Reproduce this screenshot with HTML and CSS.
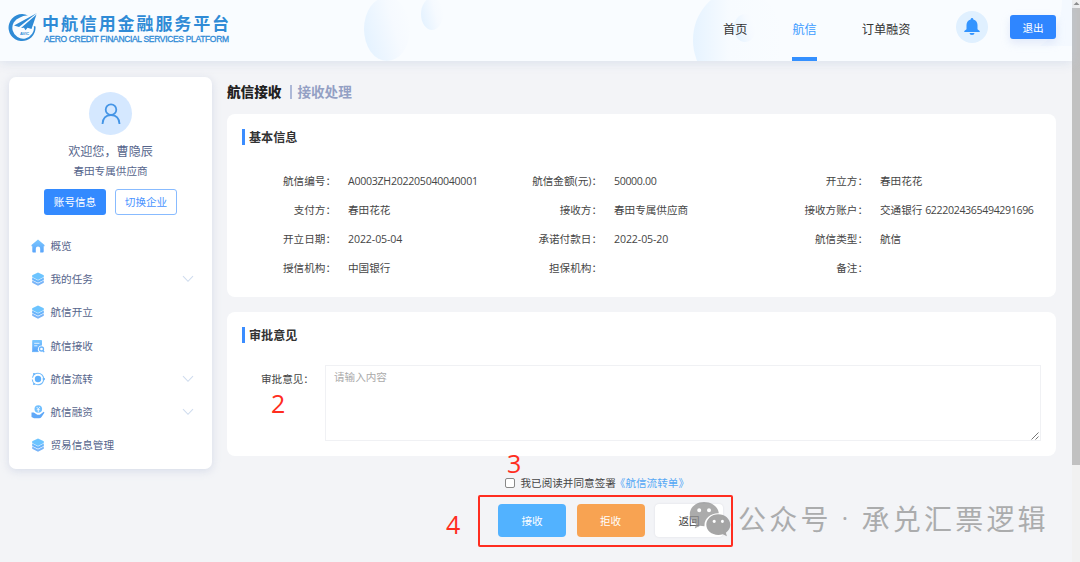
FILE: index.html
```html
<!DOCTYPE html>
<html lang="zh-CN">
<head>
<meta charset="utf-8">
<title>中航信用金融服务平台</title>
<link rel="stylesheet" href="styles.css">
</head>
<body>
<svg class="defs" width="0" height="0" aria-hidden="true">
  <defs>
    <linearGradient id="blue" x1="0" y1="0" x2="0" y2="1"><stop offset="0" stop-color="#7cc8ff"/><stop offset="1" stop-color="#5aa5fb"/></linearGradient>
    <symbol id="layers" viewBox="0 0 14 14">
      <path fill="#6cc4ff" d="M7 .4 12.8 3.2V4.900L7 7.900 1.200 4.900V3.200Z"/>
      <path fill="#68b4fb" d="M1.200 5.600 7 8.500l5.800-2.900v2.300L7 10.800 1.200 7.900Z"/>
      <path fill="#78b4f8" d="M1.200 8.600 7 11.500l5.800-2.900v2.200L7 13.700 1.200 10.800Z"/>
    </symbol>
    <symbol id="chevron" viewBox="0 0 12 8"><path fill="none" stroke="#cfdcee" stroke-width="1.100" d="M1 1.200 6 6.300l5-5.100"/></symbol>
  </defs>
</svg>
<div class="app">
  <div class="page">
    <header class="header">
      <svg class="header-bg" width="1072" height="61" viewBox="0 0 1072 61">
        <defs>
          <linearGradient id="b1" x1="0" y1=".7" x2="1" y2=".3"><stop offset="0" stop-color="#e4f2ff"/><stop offset=".65" stop-color="#f6faff"/><stop offset="1" stop-color="#f9fcff"/></linearGradient>
          <linearGradient id="b2"><stop offset="0" stop-color="#e6f3ff"/><stop offset=".4" stop-color="#f7fbff"/><stop offset="1" stop-color="#f9fcff"/></linearGradient>
        </defs>
        <ellipse cx="387" cy="29" rx="23" ry="32" fill="url(#b1)"/>
        <ellipse cx="432" cy="14" rx="11" ry="16" fill="url(#b1)"/>
        <ellipse cx="738" cy="40" rx="45" ry="50" fill="url(#b2)"/>
        <ellipse cx="745" cy="28" rx="11" ry="14" fill="url(#b1)"/>
        <path d="M1062 0h10v46h-32Q1062 32 1062 0Z" fill="#f4f9ff"/>
      </svg>
      <div class="brand">
        <svg class="brand-mark" width="30" height="32" viewBox="0 0 30 32">
          <path fill="#2f8bd6" d="M20 3.500A13.500 13.500 0 1 0 27.500 14.500L25.800 14A10.800 10.800 0 1 1 12 5.500Q16 3 20 3.500Z"/>
          <path fill="#2f8bd6" d="M29 1 6 13.500l5 1.500ZM28.500 2.500 13 16l3-.2 1.500 2.400 2-2.400 4 1.200Z"/>
          <text class="mark-text" x="12" y="22.500">AVIC</text>
        </svg>
        <div class="brand-text">
          <div class="brand-title">中航信用金融服务平台</div>
          <div class="brand-sub">AERO CREDIT FINANCIAL SERVICES PLATFORM</div>
        </div>
      </div>
      <nav class="nav">
        <a class="nav-item">首页</a>
        <a class="nav-item active">航信</a>
        <a class="nav-item">订单融资</a>
      </nav>
      <div class="bell">
        <svg width="16" height="18" viewBox="0 0 16 18"><path fill="#3394ff" d="M8 0a1.300 1.300 0 0 1 1.300 1.400C12 2 13.500 4.200 13.500 7v4.200L15.700 13v.9H.3V13l2.200-1.800V7C2.500 4.200 4 2 6.700 1.400A1.300 1.300 0 0 1 8 0ZM5.500 15h5a2.500 2 0 0 1-5 0Z"/></svg>
      </div>
      <button class="logout">退出</button>
    </header>

    <div class="body">
      <aside class="sidebar">
        <div class="avatar">
          <svg width="20" height="22" viewBox="0 0 20 22" fill="none" stroke="#4595e6" stroke-width="1.800"><circle cx="10" cy="6.700" r="5.300"/><path d="M1.500 21c.3-5.500 3.500-8.800 8.500-8.800s8.200 3.300 8.500 8.800"/></svg>
        </div>
        <div class="welcome">欢迎您，曹隐辰</div>
        <div class="company">春田专属供应商</div>
        <div class="account">
          <button class="small primary">账号信息</button>
          <button class="small outline">切换企业</button>
        </div>
        <ul class="menu">
          <li><svg class="mi" viewBox="0 0 14 14"><path fill="url(#blue)" d="M7 .4 13.500 6v1.200h-.8v5.300q0 .9-.9.900H9.200V9.800a2.200 2.200 0 0 0-4.400 0v3.600H2.200q-.9 0-.9-.9V7.200H.5V6Z"/></svg><span>概览</span></li>
          <li><svg class="mi"><use href="#layers"/></svg><span>我的任务</span><svg class="chev"><use href="#chevron"/></svg></li>
          <li><svg class="mi"><use href="#layers"/></svg><span>航信开立</span></li>
          <li><svg class="mi" viewBox="0 0 14 14"><path fill="url(#blue)" d="M2 1h8.200q.8 0 .8.800v4.800a3.600 3.600 0 0 0-3.300 5.900H2q-.8 0-.8-.8V1.800Q1.200 1 2 1Z"/><path stroke="#fff" stroke-width=".8" d="M3.200 4.300h5.300M3.200 6.800h3.200"/><path stroke="#69b3fb" stroke-width="1" d="M1 12.600h6.500"/><circle cx="10.500" cy="10" r="2" fill="none" stroke="#69b3fb" stroke-width="1.300"/><path stroke="#69b3fb" stroke-width="1.200" d="m11.800 11.500 1.400 1.700"/></svg><span>航信接收</span></li>
          <li><svg class="mi" viewBox="0 0 14 14"><circle cx="7" cy="7" r="3.200" fill="#5fb0fb"/><circle cx="7" cy="7" r="5.700" fill="none" stroke="#74bcfb" stroke-width="1.100" stroke-dasharray="15.900 2" stroke-dashoffset="-1"/><circle cx="12.800" cy="7" r="1.200" fill="#68b5fb"/><circle cx="3" cy="2" r="1.100" fill="#68b5fb"/><circle cx="3" cy="12" r="1.100" fill="#68b5fb"/></svg><span>航信流转</span><svg class="chev"><use href="#chevron"/></svg></li>
          <li><svg class="mi" viewBox="0 0 14 14"><circle cx="7.300" cy="4" r="3.800" fill="#72c0ff"/><path fill="none" stroke="#fff" stroke-width=".8" d="m5.700 2 1.600 1.900L8.900 2M7.300 4v3.200M5.800 4.700h3"/><path fill="#5fa8f8" d="M.5 7.500h2.300l3.500 2.300h2.500L12.700 6.800q1 .2.500 1.200L10.500 12q-.8 1.300-2.500 1.300H3L.5 12Z"/></svg><span>航信融资</span><svg class="chev"><use href="#chevron"/></svg></li>
          <li><svg class="mi"><use href="#layers"/></svg><span>贸易信息管理</span></li>
        </ul>
      </aside>

      <main class="main">
        <div class="crumb"><b>航信接收</b><i></i><span>接收处理</span></div>
        <section class="card info-card">
          <h2>基本信息</h2>
          <dl class="info">
            <div><dt>航信编号：</dt><dd class="num code">A0003ZH202205040040001</dd></div>
            <div><dt>航信金额(元)：</dt><dd class="num">50000.00</dd></div>
            <div><dt>开立方：</dt><dd>春田花花</dd></div>
            <div><dt>支付方：</dt><dd>春田花花</dd></div>
            <div><dt>接收方：</dt><dd>春田专属供应商</dd></div>
            <div><dt>接收方账户：</dt><dd>交通银行 <span class="num">6222024365494291696</span></dd></div>
            <div><dt>开立日期：</dt><dd class="num date">2022-05-04</dd></div>
            <div><dt>承诺付款日：</dt><dd class="num date">2022-05-20</dd></div>
            <div><dt>航信类型：</dt><dd>航信</dd></div>
            <div><dt>授信机构：</dt><dd>中国银行</dd></div>
            <div><dt>担保机构：</dt><dd></dd></div>
            <div><dt>备注：</dt><dd></dd></div>
          </dl>
        </section>
        <section class="card opinion-card">
          <h2>审批意见</h2>
          <div class="opinion">
            <label>审批意见：</label>
            <div class="textarea">请输入内容
              <svg class="grip" width="8" height="8" viewBox="0 0 8 8"><path stroke="#777" stroke-width="1" d="M.5 7.500l7-7M4.500 7.500l3-3"/></svg>
            </div>
          </div>
        </section>
        <div class="agree"><span class="checkbox"></span><span>我已阅读并同意签署</span><a>《航信流转单》</a></div>
        <div class="actions">
          <button class="btn accept">接收</button>
          <button class="btn reject">拒收</button>
          <button class="btn back">返回</button>
        </div>
      </main>
    </div>
  </div>
  <div class="scrollbar"><svg width="8" height="8" viewBox="0 0 8 8"><path fill="#8a8a8a" d="M1.500 5 4.500 2l3 3Z"/></svg><div class="thumb"></div></div>
</div>

<div class="mark frame"></div>
<div class="mark m2">2</div>
<div class="mark m3">3</div>
<div class="mark m4">4</div>
<div class="watermark">
  <svg width="42" height="36" viewBox="0 0 42 36">
    <path fill="#8f8f8f" fill-opacity=".75" fill-rule="evenodd" d="M15 1C23 1 29.300 6 29.800 12.300 21.500 12 15 17.500 15.500 25.300L11 24.800 5.800 27.500 7 23C3 20.800.8 17.200.8 13.200.8 6.300 7 1 15 1ZM10.200 7.200a2 2 0 1 0 0 4 2 2 0 0 0 0-4ZM20 7.200a2 2 0 1 0 0 4 2 2 0 0 0 0-4Z"/>
    <path fill="#9b9b9b" fill-opacity=".9" fill-rule="evenodd" d="M29.300 13.300c6.700 0 12 4.700 12 10.500 0 3.400-1.700 6-4.400 7.900l1 3.600-4-2.100c-1.400.5-3 .7-4.600.7-6.700 0-12-4.400-12-10.100s5.300-10.500 12-10.500ZM25.200 18.700a1.600 1.600 0 1 0 0 3.200 1.600 1.600 0 0 0 0-3.200ZM33.500 18.700a1.600 1.600 0 1 0 0 3.200 1.600 1.600 0 0 0 0-3.200Z"/>
  </svg>
  <span class="wm-a">公众号</span><span class="wm-dot">·</span><span>承兑汇票逻辑</span>
</div>
</body>
</html>
```
FILE: styles.css
```css
* { box-sizing: border-box; }
body {
  margin: 0;
  width: 1080px;
  height: 562px;
  position: relative;
  overflow: hidden;
  background: #f3f4f7;
  color: #454545;
  font: 10.6px/16px "Open Sans", "Noto Sans CJK SC", sans-serif;
}
button { font: inherit; padding: 0; border: 0; }
ul, dl, dd, h2 { margin: 0; padding: 0; }
.defs { position: absolute; }
.app { display: flex; height: 562px; }
.page { width: 1072px; }

.header {
  position: relative;
  display: flex;
  height: 61px;
  background: #f9fcff;
  box-shadow: 0 2px 10px rgba(190, 205, 225, .45);
}
.header-bg { position: absolute; left: 0; top: 0; }
.header > :not(.header-bg) { position: relative; }
.brand { display: flex; width: 723px; padding: 12px 0 0 8px; }
.mark-text { font: bold 4px "Liberation Sans", sans-serif; fill: #2f8bd6; }
.brand-text { margin-left: 4px; color: #2f8bd6; white-space: nowrap; }
.brand-title { font: bold 17px/22px "Noto Sans CJK SC", sans-serif; letter-spacing: 1.9px; }
.brand-sub { font: 8.5px/10px "Liberation Sans", sans-serif; letter-spacing: -.33px; margin: 0 0 0 2px; -webkit-text-stroke: .3px #2f8bd6; }
.nav { display: flex; gap: 45px; width: 233px; font-size: 12.200px; color: #333; }
.nav-item { height: 61px; padding-top: 22px; white-space: nowrap; }
.nav-item.active { color: #3c9bff; border-bottom: 4px solid #3490ff; }
.bell { width: 32px; height: 32px; margin-top: 11px; border-radius: 50%; background: #e0f0ff; display: flex; align-items: center; justify-content: center; }
.logout { margin: 15px 0 0 22px; padding-top: 1px; width: 46px; height: 24px; border-radius: 3px; background: #2f86ff; color: #fff; box-shadow: 0 4px 8px rgba(190, 205, 240, .4); }

.body { display: flex; gap: 15px; padding: 16px 0 0 9px; }
.sidebar {
  width: 203px;
  height: 392px;
  padding-top: 15px;
  display: flex;
  flex-direction: column;
  align-items: center;
  border-radius: 7px;
  background: #fff;
  color: #56658c;
  box-shadow: 0 2px 9px rgba(180, 190, 215, .45);
}
.avatar { width: 43px; height: 43px; border-radius: 50%; background: #d5e8ff; display: flex; align-items: center; justify-content: center; }
.welcome { margin-top: 9px; font-size: 12.100px; }
.company { margin-top: 3px; }
.account { display: flex; gap: 9px; margin-top: 10px; }
.small { width: 62px; height: 26px; border-radius: 3px; }
.primary { background: #338aff; color: #fff; }
.outline { background: #fff; color: #4a94ff; border: 1px solid #88bbff; }
.menu { align-self: stretch; list-style: none; margin-top: 14px; padding: 0 18px 0 22px; }
.menu li { height: 33.300px; display: flex; align-items: center; }
.mi { width: 14px; height: 14px; margin-right: 5.500px; }
.chev { width: 12px; height: 8px; margin-left: auto; }

.main { width: 829px; }
.crumb { display: flex; align-items: center; height: 30px; font-size: 13.600px; font-weight: bold; color: #222; }
.crumb i { width: 2px; height: 14px; margin: 0 5px 0 9px; background: #adb9d8; }
.crumb span { color: #93a0c4; }
.card { background: #fff; border-radius: 8px; }
.card h2 { height: 16px; padding-left: 4px; border-left: 3px solid #3b8dff; font-size: 12.100px; line-height: 18px; color: #333; }
.info-card { height: 183px; margin-top: 7px; padding: 15px; }
.info { display: grid; grid-template-columns: repeat(3, 266px); margin: 21px 0 0 -15px; }
.info div { display: flex; height: 29px; align-items: center; white-space: nowrap; }
.info dt { width: 109px; flex-shrink: 0; text-align: right; }
.info dd { margin-left: 12px; }
.num { letter-spacing: -.35px; }
.code { letter-spacing: -.27px; }
.date { letter-spacing: -.1px; }
.opinion-card { height: 144px; margin-top: 15px; padding: 15px; }
.opinion { display: flex; margin-top: 22px; }
.opinion label { width: 64px; margin: 6px 0 0 19px; }
.textarea { position: relative; width: 716px; height: 76px; padding: 3px 8px; border: 1px solid #f0f1f4; color: #aaa; }
.grip { position: absolute; right: 1px; bottom: 0; }
.agree { display: flex; align-items: center; height: 16px; margin: 19px 0 0 278px; }
.checkbox { width: 10px; height: 10px; margin-right: 5.500px; border: 1px solid #888; border-radius: 2px; background: #fff; }
.agree a { margin-left: -1px; color: #55a8f5; }
.actions { display: flex; gap: 10.500px; margin: 13px 0 0 271px; }
.btn { width: 68px; height: 33px; padding-top: 1px; border-radius: 4px; color: #fff; }
.accept { background: #52b2ff; }
.reject { background: #f8a352; }
.back { background: #fff; color: #444; box-shadow: 0 0 2px #d8dae0; }

.scrollbar { width: 8px; background: #f1f1f1; }
.scrollbar svg { display: block; }
.thumb { height: 457px; background: #c1c1c1; }

.mark { position: absolute; color: #ff2d20; font: 25px/26px "Open Sans", sans-serif; }
.m2 { left: 271px; top: 390px; }
.m3 { left: 507px; top: 450px; }
.m4 { left: 446px; top: 511px; }
.frame { left: 478px; top: 495px; width: 255px; height: 52px; border: 2px solid #ff2d20; border-radius: 2px; }
.watermark { position: absolute; left: 689px; top: 498px; display: flex; align-items: center; color: #abacad; font: 28px/40px "Noto Sans CJK SC", sans-serif; letter-spacing: 3.200px; white-space: nowrap; }
.watermark svg { margin-top: 2px; }
.wm-a { margin-left: 7px; }
.wm-dot { width: 30px; text-align: center; font-size: 24px; font-family: "Open Sans", sans-serif; }
```
